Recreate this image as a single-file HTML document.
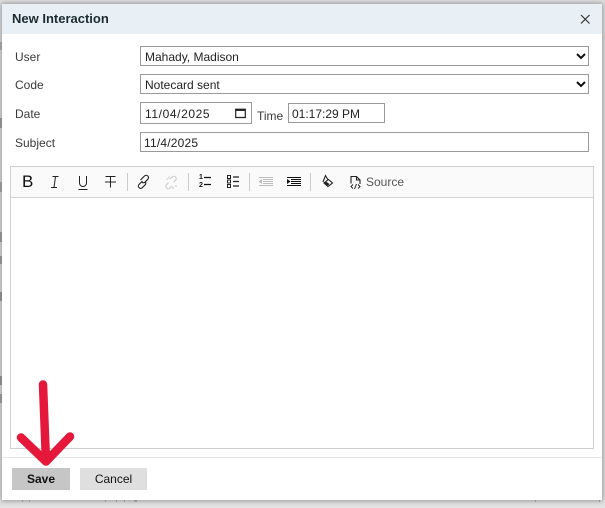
<!DOCTYPE html>
<html><head><meta charset="utf-8">
<style>
html,body{margin:0;padding:0;width:605px;height:508px;overflow:hidden;background:#e3e3e3;font-family:"Liberation Sans",sans-serif;color:#222}
.a{position:absolute}
#dlg{left:2px;top:4px;width:600px;height:496px;background:#fff;box-shadow:0 0 5px 1px rgba(0,0,0,.35)}
#hd{left:2px;top:4px;width:600px;height:30px;background:#e8f0f5}
.t{font-size:12px;line-height:16px;white-space:nowrap}
.l{color:#3a3a3a}
.box{box-sizing:border-box;border:1px solid #9a9a9a;background:#fff}
.sep{width:1px;height:18px;top:173px;background:#ccc}
.f{left:0;width:2px;background:#777;z-index:2}
.m{top:500px;height:2px;width:1px;background:#999}
svg{position:absolute;overflow:visible}
</style></head><body>
<div class="a f" style="top:42px;height:8px;opacity:.5"></div>
<div class="a f" style="top:118px;height:10px;opacity:.7"></div>
<div class="a f" style="top:182px;height:10px;opacity:.6"></div>
<div class="a f" style="top:232px;height:10px;opacity:.7"></div>
<div class="a f" style="top:256px;height:8px;opacity:.7"></div>
<div class="a f" style="top:292px;height:9px;opacity:.8"></div>
<div class="a f" style="top:376px;height:9px;opacity:.8"></div>
<div class="a f" style="top:394px;height:9px;opacity:.7"></div>
<div class="a" id="dlg"></div>
<div class="a m" style="left:22px"></div><div class="a m" style="left:29px"></div>
<div class="a m" style="left:105px"></div><div class="a m" style="left:116px"></div><div class="a m" style="left:124px"></div><div class="a m" style="left:134px;width:3px"></div>
<div class="a m" style="left:535px"></div><div class="a m" style="left:599px"></div>
<div class="a" id="hd"></div>
<div class="a t" style="left:12px;top:11px;font-weight:bold;font-size:13px;color:#1c2a33">New Interaction</div>
<svg style="left:0;top:0" width="605" height="30"><path d="M581 15l8.500 8.500M589.500 15l-8.500 8.500" stroke="#333" stroke-width="1.200" fill="none"/></svg>

<div class="a t l" style="left:15px;top:49px">User</div>
<div class="a t l" style="left:15px;top:77px">Code</div>
<div class="a t l" style="left:15px;top:106px">Date</div>
<div class="a t l" style="left:15px;top:135px">Subject</div>

<div class="a box" style="left:140px;top:46px;width:449px;height:20px"></div>
<div class="a t" style="left:145px;top:49px">Mahady, Madison</div>
<div class="a box" style="left:140px;top:74px;width:449px;height:20px"></div>
<div class="a t" style="left:145px;top:77px">Notecard sent</div>
<svg style="left:0;top:0" width="605" height="100"><path d="M577 54l4 4 4-4M577 82l4 4 4-4" stroke="#111" stroke-width="2" fill="none"/></svg>

<div class="a box" style="left:140px;top:102px;width:112px;height:22px"></div>
<div class="a t" style="left:145px;top:106px;letter-spacing:.6px">11/04/2025</div>
<svg style="left:235px;top:107px" width="12" height="12"><path d="M.7 2.200h9.600v8.300H.7z" stroke="#222" stroke-width="1.200" fill="none"/><path d="M.7 3.200h9.600" stroke="#222" stroke-width="1.500" fill="none"/></svg>
<div class="a t l" style="left:257px;top:108px">Time</div>
<div class="a box" style="left:288px;top:103px;width:97px;height:20px"></div>
<div class="a t" style="left:292px;top:106px">01:17:29 PM</div>
<div class="a box" style="left:140px;top:132px;width:449px;height:20px"></div>
<div class="a t" style="left:144px;top:135px;letter-spacing:.2px">11/4/2025</div>

<div class="a" style="box-sizing:border-box;left:10px;top:166px;width:584px;height:283px;border:1px solid #cfcfcf;background:#fff"></div>
<div class="a" style="box-sizing:border-box;left:11px;top:167px;width:582px;height:31px;background:#fafafa;border-bottom:1px solid #d4d4d4"></div>

<div class="a" style="left:22px;top:173px;font-size:17px;line-height:18px;color:#111">B</div>
<svg style="left:0;top:160px" width="420" height="40" fill="none" stroke="#222" stroke-width="1">
<path d="M52.500 16.500h6M51 27.500h6M55.500 16.500l-1.500 11"/>
<path d="M79.500 16v7a3.500 3.500 0 0 0 7 0v-7M78.500 29.500h9"/>
<path d="M105.500 16.500h10M110.500 16.500v11M105 22h11"/>
<path d="M141 20l4-4a2.300 2.300 0 0 1 3.300 3.300l-3 3a2.300 2.300 0 0 1-3-.3M143 21l-3.500 3.500a2.300 2.300 0 0 0 3.300 3.200l3-3a2.300 2.300 0 0 0-.3-3" stroke-width="1.100" transform="translate(-.5 0)"/>
<path d="M170 19l2-2a2.300 2.300 0 0 1 3.500 3.300l-2 2M172 26l-2 2a2.300 2.300 0 0 1-3.500-3.300l2-2M169 16.500v2M166 19h2M175 26h2M173 27v2" stroke="#c9c9c9" stroke-width="1.100"/>
<path d="M204 17.500h7M204 24.500h7" stroke="#111" stroke-width="1.300"/>
<path d="M227.500 15.500h3v3h-3zM227.500 20h3v3h-3zM227.500 24.500h3v3h-3z" stroke="#222"/>
<path d="M233 17h6M233 21.500h6M233 26h6" stroke="#222" stroke-width="1.200"/>
<path d="M259 17.500h14M263 19.500h10M263 21.500h10M263 23.500h10M259 25.500h14" stroke="#bdbdbd"/>
<path d="M262 19l-3.500 2.500 3.500 2.500z" fill="#bdbdbd" stroke="none"/>
<path d="M287 17.500h14M291 19.500h10M291 21.500h10M291 23.500h10M287 25.500h14" stroke="#111" stroke-width="1.100"/>
<path d="M287 19l3.500 2.500-3.500 2.500z" fill="#111" stroke="none"/>
<path d="M323 22l2.500-6.500 2.500 4.500M328.500 19.500l4 3.500-4.500 3.500-4-3.500z" stroke="#222" stroke-width="1.100"/>
<path d="M326.500 25l-2.500-2 2-1.500 3.500 2.500-1.500 1.500z" fill="#222" stroke="none"/>
<path d="M351 23.500v-7h5.500l3.500 3.500v4M356.500 16.500v3.500h3.500" stroke="#222" stroke-width="1.100"/>
<path d="M353 24.500l-2 2 2 2M358 24.500l2 2-2 2M356.500 24l-2 5" stroke="#222"/>
</svg>
<div class="a" style="left:199px;top:174px;font-size:7px;line-height:7.500px;font-weight:bold;color:#111">1<br>2</div>
<div class="a sep" style="left:127px"></div>
<div class="a sep" style="left:188px"></div>
<div class="a sep" style="left:249px"></div>
<div class="a sep" style="left:310px"></div>
<div class="a" style="left:366px;top:174px;font-size:12px;line-height:16px;color:#555">Source</div>

<div class="a" style="left:2px;top:457px;width:600px;height:1px;background:#e6e6e6"></div>
<div class="a" style="left:12px;top:468px;width:58px;height:22px;background:#c6c6c6;text-align:center;font-weight:bold;font-size:12px;line-height:22px;color:#111">Save</div>
<div class="a" style="left:80px;top:468px;width:67px;height:22px;background:#dfdfdf;text-align:center;font-size:12px;line-height:22px;color:#111">Cancel</div>

<svg style="left:0;top:0" width="605" height="508" fill="none" stroke="#e5173a" stroke-width="8.500" stroke-linecap="round" stroke-linejoin="round">
<path d="M43 384.500L46 461M21 437.500l25 24 24-25"/>
</svg>
</body></html>
